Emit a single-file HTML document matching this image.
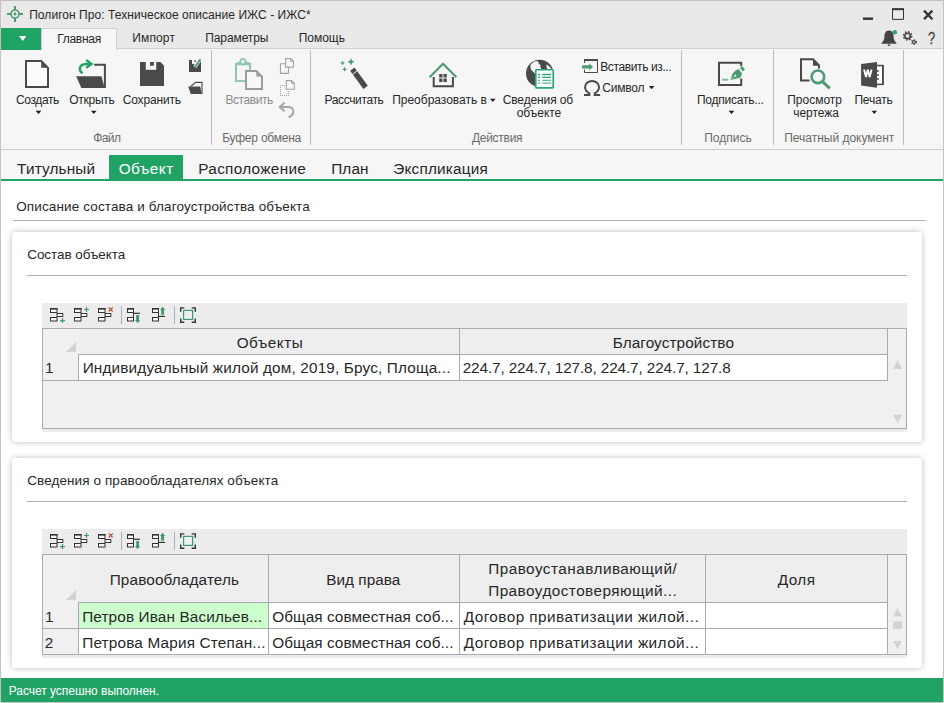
<!DOCTYPE html>
<html lang="ru">
<head>
<meta charset="utf-8">
<title>Полигон Про: Техническое описание ИЖС - ИЖС*</title>
<style>
*{box-sizing:border-box;margin:0;padding:0}
html,body{width:944px;height:703px;overflow:hidden;background:#fff}
body{font-family:"Liberation Sans",sans-serif;color:#1e1e1e;position:relative}
#win{position:absolute;left:0;top:0;width:944px;height:703px;background:#fff;overflow:hidden}
#win div,#win svg{position:absolute}
.t{position:absolute;white-space:nowrap;line-height:1}
.card{background:#fff;border-radius:3px;box-shadow:0 0 6px rgba(0,0,0,.26)}
.hr{height:1px;background:#adadb5}
.sep{width:1px;background:#bcbcc2}
.tb{background:#ececec}
.grid{background:#f0f0f0;border:1px solid #a9abb3}
.cell{background:#fff;border-right:1px solid #a9abb3;border-bottom:1px solid #a9abb3}
.hd{background:#eeeeee;border-right:1px solid #a9abb3;border-bottom:1px solid #a9abb3}

</style>
</head>
<body>
<div id="win">
<div id="title" style="left:0;top:0;width:944px;height:28px;background:#e9e9e9"></div>
<div id="menurow" style="left:0;top:28px;width:944px;height:21px;background:#e9e9e9"></div>
<div id="ribbon" style="left:0;top:48px;width:944px;height:102px;background:#f6f6f6;border-top:1px solid #d0d0d0;border-bottom:1px solid #cdcdcd"></div>
<div id="filebtn" style="left:1px;top:28px;width:40px;height:22px;background:#22a366"></div>
<div id="maintab" style="left:41px;top:28px;width:76px;height:22px;background:#f6f6f6;border:1px solid #d0d0d0;border-bottom:none"></div>
<div id="tabrow" style="left:0;top:150px;width:944px;height:31px;background:#f6f6f6;border-bottom:2px solid #22a366"></div>
<div id="acttab" style="left:109px;top:155px;width:74px;height:26px;background:#22a366"></div>

<div class="sep" style="left:211px;top:50px;height:95px"></div>
<div class="sep" style="left:310px;top:50px;height:95px"></div>
<div class="sep" style="left:681px;top:50px;height:95px"></div>
<div class="sep" style="left:773px;top:50px;height:95px"></div>
<div class="sep" style="left:903px;top:50px;height:95px"></div>

<div class="hr" style="left:13px;top:220px;width:913px"></div>

<div class="card" style="left:12px;top:232px;width:910px;height:210px"></div>
<div class="hr" style="left:27px;top:275px;width:880px"></div>
<div class="tb" style="left:42px;top:303px;width:865px;height:129px"></div>
<div class="grid" style="left:42px;top:328px;width:865px;height:101px"></div>
<div class="hd" style="background:#f0f0f0;left:43px;top:329px;width:35px;height:26px;border:none"></div>
<div class="hd" style="left:79px;top:329px;width:381px;height:26px"></div>
<div class="hd" style="left:460px;top:329px;width:428px;height:26px"></div>
<div class="hd" style="background:#f0f0f0;left:43px;top:354px;width:36px;height:27px"></div>
<div class="cell" style="left:79px;top:355px;width:381px;height:26px"></div>
<div class="cell" style="left:460px;top:355px;width:428px;height:26px"></div>

<div class="card" style="left:12px;top:458px;width:910px;height:210px"></div>
<div class="hr" style="left:27px;top:501px;width:880px"></div>
<div class="tb" style="left:42px;top:529px;width:865px;height:129px"></div>
<div class="grid" style="left:42px;top:554px;width:865px;height:101px"></div>
<div class="hd" style="background:#f0f0f0;left:43px;top:555px;width:35px;height:48px;border:none"></div>
<div class="hd" style="left:79px;top:555px;width:190px;height:48px"></div>
<div class="hd" style="left:269px;top:555px;width:191px;height:48px"></div>
<div class="hd" style="left:460px;top:555px;width:246px;height:48px"></div>
<div class="hd" style="left:706px;top:555px;width:182px;height:48px"></div>
<div class="hd" style="background:#f0f0f0;left:43px;top:602px;width:36px;height:27px"></div>
<div class="cell" style="left:79px;top:603px;width:190px;height:26px;background:#ccffcc"></div>
<div class="cell" style="left:269px;top:603px;width:191px;height:26px"></div>
<div class="cell" style="left:460px;top:603px;width:246px;height:26px"></div>
<div class="cell" style="left:706px;top:603px;width:182px;height:26px"></div>
<div class="hd" style="background:#f0f0f0;left:43px;top:629px;width:36px;height:25px;border-bottom:none"></div>
<div class="cell" style="left:79px;top:629px;width:190px;height:25px;border-bottom:none"></div>
<div class="cell" style="left:269px;top:629px;width:191px;height:25px;border-bottom:none"></div>
<div class="cell" style="left:460px;top:629px;width:246px;height:25px;border-bottom:none"></div>
<div class="cell" style="left:706px;top:629px;width:182px;height:25px;border-bottom:none"></div>

<div id="status" style="left:0;top:678px;width:944px;height:25px;background:#22a366"></div>
<div style="left:0;top:0;width:944px;height:1px;background:#c3c3c3"></div>
<div style="left:0;top:0;width:1px;height:703px;background:#c3c3c3"></div>
<div style="left:943px;top:0;width:1px;height:703px;background:#c3c3c3"></div>
<div style="left:0;top:702px;width:944px;height:1px;background:#c8c4c6"></div>

<svg id="icons" style="left:0;top:0" width="944" height="703" viewBox="0 0 944 703">
<!-- app logo -->
<g stroke="#4f9a73" fill="none">
<circle cx="15" cy="14" r="4" stroke-width="1.6"/>
<path d="M15 6v4M15 18v4M7 14h4M19 14h4" stroke-width="2"/>
</g>
<circle cx="15" cy="14" r="1.4" fill="#4f9a73"/>
<!-- file button arrow -->
<path d="M19 36h7.4l-3.7 5z" fill="#fff"/>
<!-- window controls -->
<rect x="863" y="17.5" width="10" height="2.4" fill="#333"/>
<path d="M892.5 9.2h11v10.2h-11z" fill="none" stroke="#333" stroke-width="1"/>
<rect x="892" y="8.2" width="12" height="2" fill="#333"/>
<path d="M924 10.6l8.4 8.6M932.4 10.6l-8.4 8.6" stroke="#333" stroke-width="2.3" fill="none"/>
<!-- bell -->
<path d="M889 30.4c-3.4 0-4.6 3-4.6 6.2 0 3.2-1.2 5-2.9 6.3v.9h15v-.9c-1.700-1.300-2.900-3.100-2.900-6.300 0-3.200-1.200-6.200-4.600-6.200z" fill="#444"/>
<rect x="887.8" y="44.400" width="2.4" height="1.500" fill="#444"/>
<circle cx="894.8" cy="32.2" r="2.3" fill="#3aa06e"/>
<!-- gears -->
<g fill="none" stroke="#444">
<circle cx="907.600" cy="35.900" r="2.700" stroke-width="1.600"/>
<circle cx="907.600" cy="35.900" r="4.100" stroke-width="1.500" stroke-dasharray="1.600 1.620"/>
<circle cx="914" cy="42.100" r="1.500" stroke-width="1.200"/>
<circle cx="914" cy="42.100" r="2.400" stroke-width="1.100" stroke-dasharray="1.100 1.410"/>
</g>

<!-- Создать -->
<path d="M26 61h15.200l6.800 6.800V87H26z" fill="#fbfbfb" stroke="#4a4a4a" stroke-width="2"/>
<path d="M41.200 60.500v7.300h7.300z" fill="#4a4a4a"/>
<!-- Открыть -->
<path d="M94.200 64.700h10.700V88" fill="none" stroke="#4a4a4a" stroke-width="2"/>
<path d="M76.200 76.200h25.300l3.200 11.800H81.300z" fill="#4a4a4a"/>
<path d="M82.600 73.300c-4.600-2.800-3.400-9 3.400-9.400h4.600" fill="none" stroke="#22a366" stroke-width="2.500"/>
<path d="M86.200 60.100l5.300 3.800-5.300 3.800" fill="none" stroke="#22a366" stroke-width="2.400"/>
<!-- Сохранить -->
<path d="M140 62h20.500l3.500 3.800V86h-24z" fill="#4a4a4a"/>
<rect x="145.800" y="61.500" width="10.400" height="8.300" fill="#f6f6f6"/>
<rect x="150" y="62" width="3.900" height="3.700" fill="#4a4a4a"/>
<!-- save as small -->
<path d="M189 60h12v12h-12z" fill="#4a4a4a"/>
<rect x="192" y="59.500" width="5.500" height="4.400" fill="#f6f6f6"/>
<rect x="194.300" y="60.300" width="1.500" height="1.600" fill="#4a4a4a"/>
<path d="M200.600 58.600l-5.800 8.400" stroke="#f6f6f6" stroke-width="3.600"/>
<path d="M200.400 59.200l-5.400 7.800" stroke="#4f9a73" stroke-width="2"/>
<!-- open small -->
<path d="M190.800 86.300l5-3.900h6.200V94" fill="none" stroke="#4a4a4a" stroke-width="1.100"/>
<path d="M188.200 86.600h12l1.600 7.400h-11z" fill="#4a4a4a"/>
<!-- Вставить (disabled) -->
<circle cx="243" cy="61.800" r="2.800" fill="none" stroke="#93c7ad" stroke-width="2"/>
<rect x="236.800" y="62" width="12.400" height="3.200" fill="#93c7ad"/>
<path d="M236 63v18h14V63" fill="none" stroke="#93c7ad" stroke-width="2"/>
<circle cx="243" cy="61.800" r="1.600" fill="#f6f6f6"/>
<path d="M246 71h10.300l5.700 5.600V89h-16z" fill="#f8f8f8" stroke="#9c9c9c" stroke-width="2"/>
<path d="M256.300 70.500v6.100h6.100z" fill="#9c9c9c"/>
<!-- copy small -->
<g fill="#f6f6f6" stroke="#a4a4a4" stroke-width="1.100">
<path d="M280.500 63.700h8v9.700h-8z"/>
<path d="M285.600 58.600h5.200l2.700 2.700v5.800h-7.900z"/>
<path d="M286.300 80.600h5.300l2.700 2.700v6h-8z"/>
</g>
<path d="M290.700 58.700v2.700h2.700M291.500 80.700v2.700h2.700" fill="none" stroke="#a4a4a4" stroke-width="1"/>
<g fill="#a4a4a4"><rect x="280" y="85" width="1" height="1"/><rect x="280" y="87" width="1" height="1"/><rect x="280" y="89" width="1" height="1"/><rect x="280" y="91" width="1" height="1"/><rect x="280" y="93" width="1" height="1"/><rect x="280" y="95" width="1" height="1"/><rect x="282" y="85" width="1" height="1"/><rect x="284" y="85" width="1" height="1"/><rect x="282" y="95" width="1" height="1"/><rect x="284" y="95" width="1" height="1"/><rect x="286" y="95" width="1" height="1"/><rect x="288" y="95" width="1" height="1"/><rect x="288" y="91" width="1" height="1"/><rect x="288" y="93" width="1" height="1"/></g>
<!-- undo -->
<path d="M284.700 102.800l-5 4.300 5 4.200" fill="none" stroke="#a6a6a6" stroke-width="2"/>
<path d="M280.200 107.100h7.800c6.600 0 7.400 7.800 0.500 10.200" fill="none" stroke="#a6a6a6" stroke-width="2"/>

<!-- Рассчитать wand -->
<path d="M354.500 67.600l13.300 18.200-4.400 3.200-13.300-18.200z" fill="#4a4a4a"/>
<path d="M352.300 74.500l4.900-3.600" stroke="#f6f6f6" stroke-width="1"/>
<g fill="#4a9c70">
<path d="M351 58.200l1.100 2.500 2.500 1.100-2.500 1.100-1.100 2.500-1.100-2.500-2.500-1.100 2.500-1.100z"/>
<path d="M342.500 60.500l.75 1.750 1.750.75-1.750.75-.75 1.750-.75-1.750-1.750-.75 1.750-.75z"/>
<path d="M344.600 66.800l.75 1.750 1.750.75-1.750.75-.75 1.750-.75-1.750-1.750-.75 1.750-.75z"/>
</g>
<!-- Преобразовать house -->
<path d="M433.700 77v9.300h19.200V77" fill="none" stroke="#4a4a4a" stroke-width="2"/>
<path d="M429.600 77.200L443 63.800l13.400 13.400" fill="none" stroke="#4f9a73" stroke-width="2.200"/>
<g fill="#4a4a4a"><rect x="439.200" y="74" width="3.300" height="3.500"/><rect x="443.500" y="74" width="3.300" height="3.500"/><rect x="439.200" y="78.500" width="3.300" height="3.500"/><rect x="443.500" y="78.500" width="3.300" height="3.500"/></g>
<path d="M490 98.700h5.600l-2.800 3.300z" fill="#1e1e1e"/>
<!-- Сведения об объекте -->
<circle cx="539.700" cy="73.400" r="13.700" fill="#4a4a4a"/>
<path d="M530.800 64.500l3.200-3 3.700-.4 1.200 2.700 1.800 1.400-.6 1.400 .9 1.500v2h-5.500v4.300l-2-2.300-2.400-2.400-.8-3z" fill="#f6f6f6"/>
<path d="M546.600 64.600l2.300 1.300 2.700 3.100h-4.300l-.9-2.200z" fill="#f6f6f6"/>
<rect x="535.750" y="69.750" width="17.500" height="18.200" rx="1" fill="#fcfcfc" stroke="#2aa57d" stroke-width="1.700"/>
<g stroke="#2aa57d" stroke-width="1.300"><path d="M542.200 74.500h9M542.200 77.400h9M538 74.500h2.100M538 77.400h2.100"/><path d="M542.200 80.300h9M542.200 83.200h9M538 80.300h2.100M538 83.200h2.100" opacity=".75"/></g>
<!-- Вставить из -->
<path d="M584.500 63v-3h13v12.500h-13v-3" fill="none" stroke="#4a4a4a" stroke-width="1"/>
<rect x="584" y="59" width="14" height="2" fill="#4a4a4a"/>
<path d="M582 65.300h7.200v-1.900l3.900 3.450-3.900 3.450v-1.900H582z" fill="#4f9a73"/>
<!-- omega -->
<path d="M584 94.900h5.400v-1.500c-2.700-1.300-4.300-3.500-4.300-6.300a6.950 6 0 0 1 13.900 0c0 2.800-1.600 5-4.300 6.300v1.500h5.400" fill="none" stroke="#4a4a4a" stroke-width="2"/>
<!-- Символ arrow -->
<path d="M648.800 85.900h5.600l-2.800 3.300z" fill="#1e1e1e"/>
<!-- Подписать -->
<path d="M741.200 66v-3.300H719v22.300h22.200v-6.600" fill="none" stroke="#4a4a4a" stroke-width="2"/>
<rect x="722" y="78.800" width="6.200" height="1.900" fill="#7fbf9f"/>
<path d="M730.400 80l1.900-6 3.600-3.700 2.600-1.200 3.500 4.400-1.500 3.900-4 1.300z" fill="#4a9c70"/>
<path d="M739.900 67.800l2.200-1.900 2.900 3.700-2.200 1.900z" fill="#4a9c70"/>
<circle cx="735.300" cy="75.700" r="1.050" fill="#f6f6f6"/>
<path d="M730.800 79.600l3.800-3.400" stroke="#f6f6f6" stroke-width=".6"/>
<!-- dropdown arrows -->
<g fill="#1e1e1e">
<path d="M35.700 110.800h5.600l-2.800 3.300z"/><path d="M91 110.800h5.600l-2.800 3.300z"/>
<path d="M728.700 110.800h5.600l-2.800 3.300z"/><path d="M871.500 110.800h5.600l-2.800 3.300z"/>
</g>
<!-- Просмотр чертежа -->
<path d="M809.600 80.600H801V59.200h12l6 6.300v3" fill="none" stroke="#4a4a4a" stroke-width="2"/>
<path d="M813 58.700v7.100h7z" fill="#4a4a4a"/>
<circle cx="817.900" cy="76.800" r="6.300" fill="#f6f6f6" stroke="#4f9a73" stroke-width="2.600"/>
<path d="M822.800 81.800l7 6.600" stroke="#4f9a73" stroke-width="3"/>
<!-- Печать (word) -->
<rect x="876" y="64.800" width="7.900" height="20.300" fill="#4a4a4a"/>
<rect x="877" y="66.300" width="5" height="17.300" fill="#fdfdfd"/>
<path d="M861.100 64.100l15.900-2v25.600l-15.900-2.100z" fill="#4a4a4a"/>
<path d="M876.800 71h2M876.800 75h2M876.800 79h2" stroke="#4a4a4a" stroke-width="1.300"/>
<path d="M864 69.600l2 7.500 1.800-7.500 1.800 7.500 2-7.500" fill="none" stroke="#fff" stroke-width="1.900" stroke-linejoin="miter"/>
</svg>
<svg id="gicons" style="left:0;top:0" width="944" height="703" viewBox="0 0 944 703">

<g>
<!-- icon1 -->
<g fill="#f4f4f4" stroke="#333" stroke-width="1">
<rect x="50.500" y="308.500" width="6.500" height="4"/><rect x="57" y="313.500" width="5.800" height="3"/><rect x="50.500" y="317.500" width="6.500" height="3.500"/>
<rect x="74.500" y="308.500" width="6.500" height="4"/><rect x="81" y="313.500" width="5.800" height="3"/><rect x="74.500" y="317.500" width="6.500" height="3.500"/>
<rect x="98.500" y="308.500" width="6.500" height="4"/><rect x="105" y="313.500" width="5.800" height="3"/><rect x="98.500" y="317.500" width="6.500" height="3.500"/>
<rect x="127.500" y="308.500" width="6" height="4"/><rect x="127.500" y="317.500" width="6" height="3.500"/>
<rect x="152.500" y="308.500" width="6" height="4"/><rect x="152.500" y="317.500" width="6" height="3.500"/>
</g>
<g fill="#333">
<rect x="50" y="308" width="7.500" height="1.600"/><rect x="74" y="308" width="7.500" height="1.600"/><rect x="98" y="308" width="7.500" height="1.600"/><rect x="127" y="308" width="7" height="1.600"/><rect x="152" y="308" width="7" height="1.600"/>
<rect x="133" y="312.500" width="1" height="5"/><rect x="133" y="312.700" width="7" height="1.200"/>
<rect x="158" y="312.500" width="1" height="5"/><rect x="158" y="315.800" width="7" height="1.200"/>
</g>
<path d="M60 320.600h5M62.500 318.100v5M84 309.500h5M86.500 307v5" stroke="#3d9b6b" stroke-width="1.200" fill="none"/>
<path d="M108.700 307.500l4 4M112.700 307.500l-4 4" stroke="#b55a40" stroke-width="1.300" fill="none"/>
<path d="M136.200 315h2.800v5.200h1.300l-2.700 2.900-2.700-2.900h1.300z" fill="#3d9b6b"/>
<path d="M162.600 306.800l2.600 3.200h-1.200v4.800h-2.800V310H160z" fill="#3d9b6b"/>
<rect x="121" y="306" width="1" height="18" fill="#aab2c2"/>
<rect x="174" y="306" width="1" height="18" fill="#aab2c2"/>
<path d="M184.300 307.900h-3.600v3.800M191.700 307.900h3.600v3.800M184.300 322.200h-3.600v-3.800M191.700 322.200h3.600v-3.800" fill="none" stroke="#333" stroke-width="1.400"/>
<rect x="183.600" y="310.400" width="9" height="9" fill="#f0f0f0" stroke="#3d9b6b" stroke-width="1.200"/>
</g>
<g transform="translate(0 226)">
<!-- icon1 -->
<g fill="#f4f4f4" stroke="#333" stroke-width="1">
<rect x="50.500" y="308.500" width="6.500" height="4"/><rect x="57" y="313.500" width="5.800" height="3"/><rect x="50.500" y="317.500" width="6.500" height="3.500"/>
<rect x="74.500" y="308.500" width="6.500" height="4"/><rect x="81" y="313.500" width="5.800" height="3"/><rect x="74.500" y="317.500" width="6.500" height="3.500"/>
<rect x="98.500" y="308.500" width="6.500" height="4"/><rect x="105" y="313.500" width="5.800" height="3"/><rect x="98.500" y="317.500" width="6.500" height="3.500"/>
<rect x="127.500" y="308.500" width="6" height="4"/><rect x="127.500" y="317.500" width="6" height="3.500"/>
<rect x="152.500" y="308.500" width="6" height="4"/><rect x="152.500" y="317.500" width="6" height="3.500"/>
</g>
<g fill="#333">
<rect x="50" y="308" width="7.500" height="1.600"/><rect x="74" y="308" width="7.500" height="1.600"/><rect x="98" y="308" width="7.500" height="1.600"/><rect x="127" y="308" width="7" height="1.600"/><rect x="152" y="308" width="7" height="1.600"/>
<rect x="133" y="312.500" width="1" height="5"/><rect x="133" y="312.700" width="7" height="1.200"/>
<rect x="158" y="312.500" width="1" height="5"/><rect x="158" y="315.800" width="7" height="1.200"/>
</g>
<path d="M60 320.600h5M62.500 318.100v5M84 309.500h5M86.500 307v5" stroke="#3d9b6b" stroke-width="1.200" fill="none"/>
<path d="M108.700 307.500l4 4M112.700 307.500l-4 4" stroke="#b55a40" stroke-width="1.300" fill="none"/>
<path d="M136.200 315h2.800v5.200h1.300l-2.700 2.900-2.700-2.900h1.300z" fill="#3d9b6b"/>
<path d="M162.600 306.800l2.600 3.200h-1.200v4.800h-2.800V310H160z" fill="#3d9b6b"/>
<rect x="121" y="306" width="1" height="18" fill="#aab2c2"/>
<rect x="174" y="306" width="1" height="18" fill="#aab2c2"/>
<path d="M184.300 307.900h-3.600v3.800M191.700 307.900h3.600v3.800M184.300 322.200h-3.600v-3.800M191.700 322.200h3.600v-3.800" fill="none" stroke="#333" stroke-width="1.400"/>
<rect x="183.600" y="310.400" width="9" height="9" fill="#f0f0f0" stroke="#3d9b6b" stroke-width="1.200"/>
</g>
<!-- header corner triangles -->
<path d="M76 342v10H66z" fill="#d2d2d2"/>
<path d="M76 590v10H66z" fill="#d2d2d2"/>
<!-- scroll arrows -->
<g fill="#d3d3d3">
<path d="M897.500 360.300l4.600 8.700h-9.200z"/><path d="M897.500 423.500l4.600-8.700h-9.200z"/>
<path d="M897.500 608l4.600 8.600h-9.200z"/><rect x="893" y="621.200" width="9.200" height="7.700"/><path d="M897.500 649.500l4.600-8.500h-9.200z"/>
</g>
</svg>


<!-- text labels -->
<span class="t" style="left:29.20px;top:9.00px;font-size:12px;letter-spacing:0.053px;color:#282828;">Полигон Про: Техническое описание ИЖС - ИЖС*</span>
<span class="t" style="left:57.20px;top:32.60px;font-size:12px;letter-spacing:-0.283px;color:#282828;">Главная</span>
<span class="t" style="left:132.20px;top:32.00px;font-size:12px;letter-spacing:0.160px;color:#282828;">Импорт</span>
<span class="t" style="left:205.20px;top:32.00px;font-size:12px;letter-spacing:-0.088px;color:#282828;">Параметры</span>
<span class="t" style="left:298.70px;top:32.00px;font-size:12px;letter-spacing:-0.020px;color:#282828;">Помощь</span>
<span class="t" style="left:15.95px;top:93.80px;font-size:12px;letter-spacing:-0.367px;color:#282828;">Создать</span>
<span class="t" style="left:69.20px;top:93.80px;font-size:12px;letter-spacing:-0.242px;color:#282828;">Открыть</span>
<span class="t" style="left:122.70px;top:93.80px;font-size:12px;letter-spacing:-0.150px;color:#282828;">Сохранить</span>
<span class="t" style="left:93.20px;top:131.60px;font-size:12px;letter-spacing:-0.567px;color:#6a6a6a;">Файл</span>
<span class="t" style="left:225.45px;top:93.80px;font-size:12px;letter-spacing:-0.421px;color:#8c8c8c;">Вставить</span>
<span class="t" style="left:222.20px;top:131.60px;font-size:12px;letter-spacing:-0.223px;color:#6a6a6a;">Буфер обмена</span>
<span class="t" style="left:324.45px;top:93.80px;font-size:12px;letter-spacing:-0.356px;color:#282828;">Рассчитать</span>
<span class="t" style="left:392.20px;top:93.80px;font-size:12px;letter-spacing:-0.014px;color:#282828;">Преобразовать в</span>
<span class="t" style="left:502.70px;top:93.80px;font-size:12px;letter-spacing:-0.120px;color:#282828;">Сведения об</span>
<span class="t" style="left:516.70px;top:106.50px;font-size:12px;letter-spacing:-0.033px;color:#282828;">объекте</span>
<span class="t" style="left:471.95px;top:131.60px;font-size:12px;letter-spacing:-0.279px;color:#6a6a6a;">Действия</span>
<span class="t" style="left:600.20px;top:61.25px;font-size:12px;letter-spacing:-0.381px;color:#282828;">Вставить из...</span>
<span class="t" style="left:602.20px;top:82.00px;font-size:12px;letter-spacing:-0.190px;color:#282828;">Символ</span>
<span class="t" style="left:696.95px;top:93.80px;font-size:12px;letter-spacing:-0.223px;color:#282828;">Подписать...</span>
<span class="t" style="left:704.20px;top:131.60px;font-size:12px;letter-spacing:0.008px;color:#6a6a6a;">Подпись</span>
<span class="t" style="left:787.20px;top:93.80px;font-size:12px;letter-spacing:0.007px;color:#282828;">Просмотр</span>
<span class="t" style="left:793.20px;top:106.50px;font-size:12px;letter-spacing:-0.033px;color:#282828;">чертежа</span>
<span class="t" style="left:854.45px;top:93.80px;font-size:12px;letter-spacing:-0.190px;color:#282828;">Печать</span>
<span class="t" style="left:784.20px;top:131.60px;font-size:12px;letter-spacing:-0.013px;color:#6a6a6a;">Печатный документ</span>
<span class="t" style="left:17.10px;top:161.00px;font-size:15.33px;letter-spacing:0.150px;color:#282828;">Титульный</span>
<span class="t" style="left:118.70px;top:161.00px;font-size:15.33px;letter-spacing:0.460px;color:#ffffff;">Объект</span>
<span class="t" style="left:198.30px;top:161.00px;font-size:15.33px;letter-spacing:0.300px;color:#282828;">Расположение</span>
<span class="t" style="left:331.20px;top:161.00px;font-size:15.33px;letter-spacing:0.133px;color:#282828;">План</span>
<span class="t" style="left:393.20px;top:161.00px;font-size:15.33px;letter-spacing:0.210px;color:#282828;">Экспликация</span>
<span class="t" style="left:16.20px;top:199.70px;font-size:13.5px;letter-spacing:0.129px;color:#282828;">Описание состава и благоустройства объекта</span>
<span class="t" style="left:27.20px;top:247.70px;font-size:13.5px;letter-spacing:-0.054px;color:#282828;">Состав объекта</span>
<span class="t" style="left:27.20px;top:473.70px;font-size:13.5px;letter-spacing:0.097px;color:#282828;">Сведения о правообладателях объекта</span>
<span class="t" style="left:236.70px;top:335.10px;font-size:15.33px;letter-spacing:0.467px;color:#282828;">Объекты</span>
<span class="t" style="left:612.70px;top:335.10px;font-size:15.33px;letter-spacing:0.093px;color:#282828;">Благоустройство</span>
<span class="t" style="left:44.90px;top:360.20px;font-size:15.33px;letter-spacing:0.000px;color:#282828;">1</span>
<span class="t" style="left:82.70px;top:360.20px;font-size:15.33px;letter-spacing:0.151px;color:#282828;">Индивидуальный жилой дом, 2019, Брус, Площа...</span>
<span class="t" style="left:462.70px;top:360.20px;font-size:15.33px;letter-spacing:-0.121px;color:#282828;">224.7, 224.7, 127.8, 224.7, 224.7, 127.8</span>
<span class="t" style="left:109.70px;top:571.80px;font-size:15.33px;letter-spacing:0.129px;color:#282828;">Правообладатель</span>
<span class="t" style="left:326.20px;top:571.80px;font-size:15.33px;letter-spacing:0.037px;color:#282828;">Вид права</span>
<span class="t" style="left:488.20px;top:560.90px;font-size:15.33px;letter-spacing:0.465px;color:#282828;">Правоустанавливающий/</span>
<span class="t" style="left:488.20px;top:582.90px;font-size:15.33px;letter-spacing:0.443px;color:#282828;">Правоудостоверяющий...</span>
<span class="t" style="left:777.70px;top:571.80px;font-size:15.33px;letter-spacing:0.433px;color:#282828;">Доля</span>
<span class="t" style="left:44.90px;top:609.00px;font-size:15.33px;letter-spacing:0.000px;color:#282828;">1</span>
<span class="t" style="left:82.20px;top:609.00px;font-size:15.33px;letter-spacing:0.127px;color:#282828;">Петров Иван Васильев...</span>
<span class="t" style="left:272.20px;top:609.00px;font-size:15.33px;letter-spacing:0.059px;color:#282828;">Общая совместная соб...</span>
<span class="t" style="left:463.70px;top:609.00px;font-size:15.33px;letter-spacing:0.439px;color:#282828;">Договор приватизации жилой...</span>
<span class="t" style="left:44.70px;top:635.00px;font-size:15.33px;letter-spacing:0.000px;color:#282828;">2</span>
<span class="t" style="left:82.20px;top:635.00px;font-size:15.33px;letter-spacing:0.173px;color:#282828;">Петрова Мария Степан...</span>
<span class="t" style="left:272.20px;top:635.00px;font-size:15.33px;letter-spacing:0.059px;color:#282828;">Общая совместная соб...</span>
<span class="t" style="left:463.70px;top:635.00px;font-size:15.33px;letter-spacing:0.439px;color:#282828;">Договор приватизации жилой...</span>
<span class="t" style="left:8.70px;top:685.00px;font-size:12px;letter-spacing:-0.030px;color:#ffffff;">Расчет успешно выполнен.</span>
<span class="t" style="left:928.00px;top:30.90px;font-size:16px;letter-spacing:0.000px;color:#444;-webkit-text-stroke:.3px #444;transform:scaleX(.8);transform-origin:0 0;">?</span>
</div>
</body>
</html>
